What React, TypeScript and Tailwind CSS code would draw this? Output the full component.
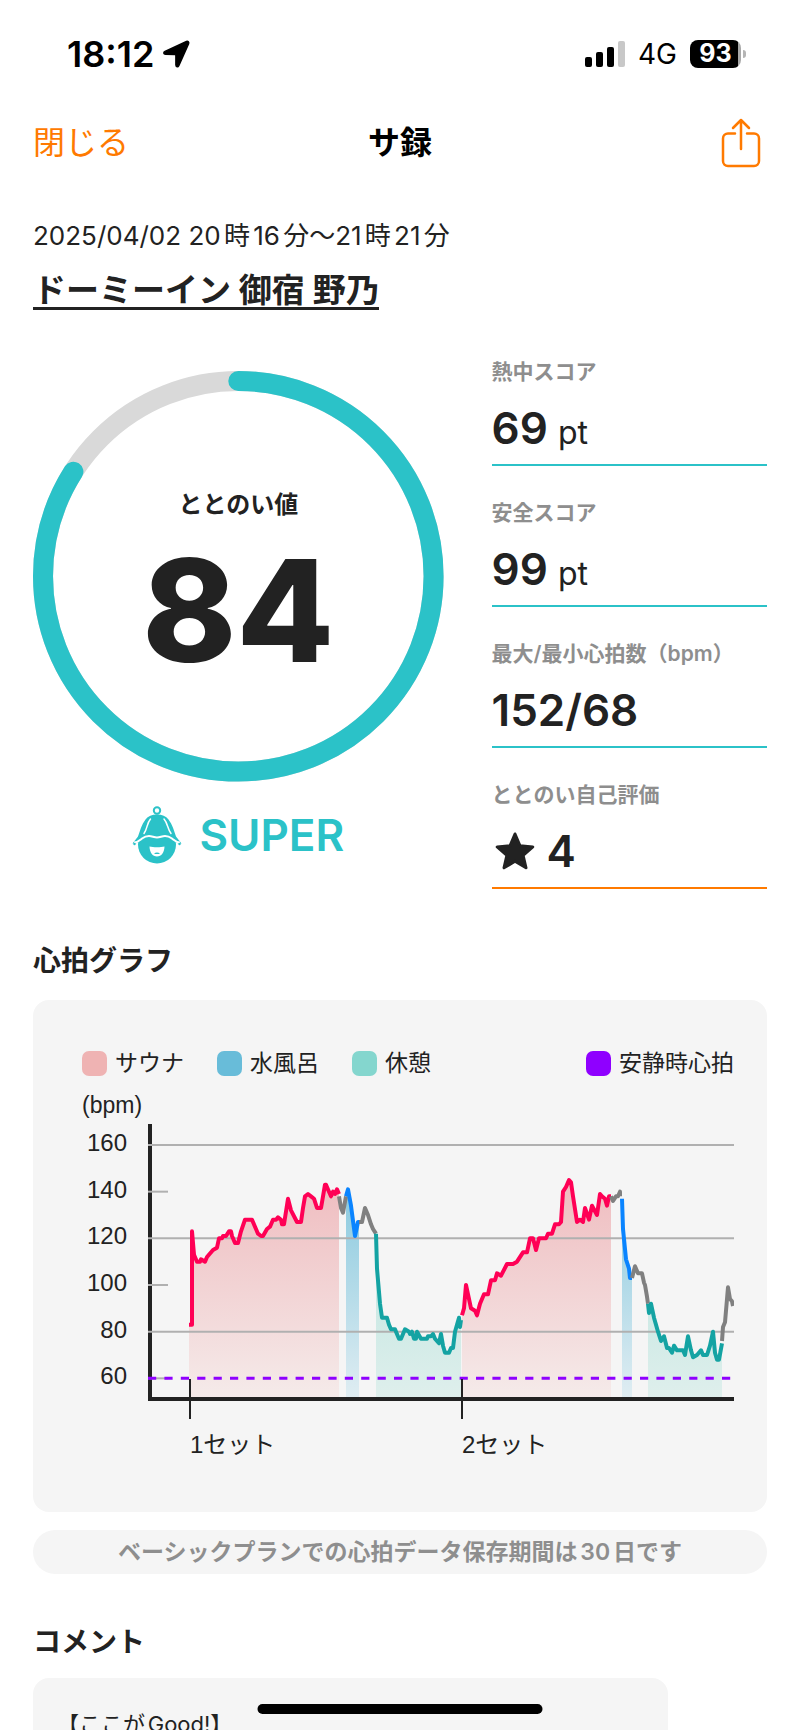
type Phase = "sauna" | "water" | "rest" | "move";
type Point = [x: number, bpm: number];

interface Segment {
  phase: Phase;
  points: Point[];
}

const BPM_TOP = 160;
const BPM_RESTING = 60;
const PLOT_LEFT = 68;
const PLOT_RIGHT = 652;
const PLOT_TOP = 56;
const PLOT_BOTTOM = 308;

const STROKES: Record<Phase, string> = {
  sauna: "#ff0055",
  water: "#0a84ff",
  rest: "#14a3a3",
  move: "#808080",
};

const HEART_RATE: Segment[] = [
  {
    phase: "sauna",
    points: [
      [39, 83], [42, 83], [42, 123], [44, 113], [47, 110], [50, 110], [51, 111], [55, 110],
      [57, 112], [63, 115], [67, 116], [69, 120], [72, 120], [73, 121], [76, 121], [79, 123],
      [81, 123], [82, 121], [85, 118], [88, 118], [91, 123], [95, 128], [102, 128], [105, 125],
      [108, 122], [111, 121], [113, 121], [117, 124], [120, 125], [123, 128], [126, 128], [128, 129],
      [131, 128], [132, 126], [134, 126], [138, 137], [141, 132], [147, 127], [151, 127], [153, 133],
      [155, 138], [158, 139], [161, 138], [164, 137], [167, 133], [171, 133], [173, 138], [175, 143],
      [176, 143], [179, 140], [181, 138], [183, 140], [185, 139], [187, 141], [189, 139],
    ],
  },
  { phase: "move", points: [[189, 138], [191, 133], [193, 131], [196, 138]] },
  { phase: "water", points: [[196, 138], [198, 141], [201, 134], [205, 121], [208, 127], [209, 127]] },
  {
    phase: "move",
    points: [[209, 127], [212, 127], [215, 133], [218, 130], [221, 126], [223, 124], [226, 122]],
  },
  {
    phase: "rest",
    points: [
      [226, 122], [227, 107], [230, 92], [232, 86], [237, 86], [239, 83], [241, 81], [245, 81],
      [246, 80], [249, 77], [251, 77], [255, 81], [259, 80], [260, 79], [262, 80], [264, 77],
      [266, 77], [267, 80], [271, 77], [277, 77], [278, 78], [281, 78], [283, 79], [285, 77],
      [289, 75], [291, 79], [293, 74], [295, 71], [299, 71], [301, 73], [303, 73], [305, 80],
      [309, 86], [310, 82], [311, 85],
    ],
  },
  {
    phase: "sauna",
    points: [
      [312, 87], [314, 90], [316, 100], [321, 90], [325, 89], [327, 87], [330, 92], [334, 96],
      [338, 96], [341, 102], [345, 102], [347, 105], [351, 104], [357, 109], [363, 109], [367, 110],
      [373, 114], [377, 114], [380, 120], [383, 120], [386, 115], [389, 120], [396, 120], [398, 122],
      [402, 122], [405, 126], [409, 126], [411, 127], [413, 140], [416, 142], [419, 145], [421, 144],
      [423, 138], [427, 127], [430, 128], [433, 127], [435, 133], [439, 128], [442, 134], [447, 130],
      [450, 139], [452, 138], [455, 137], [457, 134], [459, 138], [461, 138],
    ],
  },
  { phase: "move", points: [[461, 138], [463, 136], [466, 138], [468, 138], [470, 140], [470, 138]] },
  { phase: "water", points: [[472, 137], [473, 124], [476, 111], [479, 107], [480, 103], [482, 103]] },
  {
    phase: "move",
    points: [[482, 103], [485, 108], [488, 105], [492, 105], [494, 101], [495, 100], [497, 95], [498, 92]],
  },
  {
    phase: "rest",
    points: [
      [498, 92], [499, 88], [501, 92], [504, 86], [508, 80], [511, 76], [514, 78], [517, 73],
      [519, 73], [522, 71], [524, 74], [527, 72], [533, 72], [535, 70], [538, 78], [541, 72],
      [543, 69], [547, 70], [551, 72], [553, 70], [557, 70], [560, 74], [563, 80], [565, 71],
      [567, 68], [569, 68], [572, 75],
    ],
  },
  {
    phase: "move",
    points: [[572, 76], [573, 82], [575, 84], [578, 99], [580, 94], [582, 93], [583, 91]],
  },
];

const SETS = [
  { label: "1セット", x: 40 },
  { label: "2セット", x: 312 },
];

const LEGEND = [
  { label: "サウナ", color: "bg-[#efb3b3]" },
  { label: "水風呂", color: "bg-[#68bcd9]" },
  { label: "休憩", color: "bg-[#84d6ce]" },
];

function bpmToY(bpm: number) {
  return PLOT_TOP + ((BPM_TOP - bpm) * 7) / 3;
}

function toLine(points: Point[]) {
  return points.map(([x, bpm]) => `${PLOT_LEFT + x},${bpmToY(bpm).toFixed(1)}`).join(" ");
}

function toArea(points: Point[]) {
  const first = PLOT_LEFT + points[0][0];
  const last = PLOT_LEFT + points[points.length - 1][0];
  return `${first},${PLOT_BOTTOM} ${toLine(points)} ${last},${PLOT_BOTTOM}`;
}

function StatusBar() {
  return (
    <div className="flex h-[107px] items-center justify-between pl-[67px] pr-[54px] text-black">
      <div className="flex items-center gap-2">
        <span className="text-[36px] font-semibold leading-none">18:12</span>
        <svg viewBox="0 0 28 28" className="size-7" aria-hidden="true">
          <path
            d="M24.500 1.500 3 11.400c-1.800.900-1.500 2.800.5 2.900l9.500.300c.700 0 .900.300.900 1v9.400c.100 2 2.100 2.300 2.900.6L26.600 3.700c.600-1.500-.6-2.800-2.100-2.200z"
            fill="currentColor"
            stroke="currentColor"
            strokeWidth="1.500"
            strokeLinejoin="round"
          />
        </svg>
      </div>
      <div className="flex items-center">
        <svg viewBox="0 0 40 26" className="mr-[13px] h-[26px] w-10" aria-hidden="true">
          <rect x="0" y="16" width="7" height="10" rx="2" />
          <rect x="11" y="11" width="7" height="15" rx="2" />
          <rect x="22" y="6" width="7" height="20" rx="2" />
          <rect x="33" y="0" width="7" height="26" rx="2" fill="#c8c8c8" />
        </svg>
        <span className="mr-[13px] text-[28px] leading-none">4G</span>
        <div className="flex h-7 w-[51px] items-center justify-center rounded-lg bg-[linear-gradient(90deg,#000_95%,#a8a8a8_95%)] text-[25px] font-bold leading-none text-white">
          93
        </div>
        <div className="ml-[2px] h-2 w-[3px] rounded-r-full bg-[#b5b5b5]" />
      </div>
    </div>
  );
}

function Header() {
  return (
    <header className="grid h-[72px] grid-cols-3 items-center px-[33px]">
      <button type="button" className="justify-self-start text-[32px] leading-none text-[#ff7a00]">
        閉じる
      </button>
      <h1 className="justify-self-center text-[32px] font-bold leading-none text-black">サ録</h1>
      <button type="button" aria-label="共有" className="mr-[6px] justify-self-end text-[#ff7a00]">
        <svg
          viewBox="0 0 40 50"
          className="h-[50px] w-10"
          fill="none"
          stroke="currentColor"
          strokeWidth="2.500"
          strokeLinecap="round"
          strokeLinejoin="round"
        >
          <path d="M14 15.500H7a5 5 0 0 0-5 5V43a5 5 0 0 0 5 5h26a5 5 0 0 0 5-5V20.500a5 5 0 0 0-5-5h-7" />
          <path d="M20 31V2M12 10l8-8 8 8" />
        </svg>
      </button>
    </header>
  );
}

function ScoreRing({ score }: { score: number }) {
  return (
    <div className="grid">
      <svg viewBox="0 0 410 410" className="col-start-1 row-start-1 w-full" aria-hidden="true">
        <g fill="none" strokeWidth="20" transform="rotate(-90 205 205)">
          <circle cx="205" cy="205" r="195" stroke="#d9d9d9" />
          <circle
            cx="205"
            cy="205"
            r="195"
            stroke="#2bc2c8"
            strokeLinecap="round"
            pathLength="100"
            strokeDasharray={`${score} 100`}
          />
        </g>
      </svg>
      <div className="col-start-1 row-start-1 flex flex-col items-center pt-[122px]">
        <p className="text-2xl font-semibold leading-6">ととのい値</p>
        <p className="mt-[22px] text-[142px] font-extrabold leading-[142px]">{score}</p>
      </div>
    </div>
  );
}

function BellIcon() {
  return (
    <svg viewBox="0 0 50 58" className="h-[58px] w-[50px]" aria-hidden="true">
      <circle cx="25" cy="4.500" r="3.200" fill="none" stroke="#2bc2c8" strokeWidth="2" />
      <circle cx="25" cy="38.500" r="19" fill="#2bc2c8" />
      <path
        d="M25 8.500c-5 0-9 1.500-11.500 5C9.500 18.500 8 25 6 30.500L.5 37.500c3 .3 5-.5 7-2.500 3-3 5-4.500 9-4.500 3.500 0 5 1.500 8.500 1.500s5-1.500 8.500-1.500c4 0 6 1.500 9 4.500 2 2 4 2.800 7 2.500L44 30.500c-2-5.500-3.500-12-7.500-17-2.500-3.500-6.500-5-11.500-5z"
        fill="#2bc2c8"
      />
      <path
        d="M2 36.500c4 0 5.500-2 8-4 2.500-1.800 4.500-2.500 7-2.500 3 0 5 1.500 8 1.500s5-1.500 8-1.500c2.500 0 4.500.7 7 2.500 2.500 2 4 4 8 4"
        fill="none"
        stroke="#fff"
        strokeWidth="2"
      />
      <path
        d="M18.500 13c-4 4.500-3 10-6.500 14.500M32 13c4 4.500 3.500 10 7 14.500"
        fill="none"
        stroke="#fff"
        strokeWidth="1.500"
        strokeLinecap="round"
      />
      <circle cx="2.500" cy="38" r="1.200" fill="#2bc2c8" />
      <circle cx="47.500" cy="38" r="1.200" fill="#2bc2c8" />
      <path d="M17.500 40.500c3.500 1 11.500 1 15 0-.2 6-3 10-7.500 10s-7.300-4-7.500-10z" fill="#fff" />
      <path d="M22 47.500c1.500-1.200 4.500-1.200 6 0-1.500.8-4.500.8-6 0z" fill="#2bc2c8" />
    </svg>
  );
}

function Stat({
  label,
  accent = "border-[#2bc2c8]",
  children,
}: {
  label: string;
  accent?: string;
  children: React.ReactNode;
}) {
  return (
    <div className={`flex h-[141px] flex-col justify-end border-b-2 ${accent}`}>
      <dt className="text-[21px] font-semibold leading-6 text-[#8e8e8e] [text-autospace:normal]">
        {label}
      </dt>
      <dd className="mt-[14px] mb-[6px] flex h-[60px] items-baseline text-[44px] font-semibold leading-[60px]">
        {children}
      </dd>
    </div>
  );
}

function HeartRateChart() {
  return (
    <svg
      viewBox="0 0 652 370"
      className="block w-full font-['Liberation_Sans','Noto_Sans_CJK_JP',sans-serif]"
      role="img"
      aria-label="心拍グラフ"
    >
      <defs>
        <linearGradient id="sauna" gradientUnits="userSpaceOnUse" x1="0" y1="90" x2="0" y2="310">
          <stop offset="0" stopColor="#efbcbf" />
          <stop offset="1" stopColor="#f5ebea" />
        </linearGradient>
        <linearGradient id="water" gradientUnits="userSpaceOnUse" x1="0" y1="90" x2="0" y2="310">
          <stop offset="0" stopColor="#86c8de" />
          <stop offset="1" stopColor="#e0edf2" />
        </linearGradient>
        <linearGradient id="rest" gradientUnits="userSpaceOnUse" x1="0" y1="150" x2="0" y2="310">
          <stop offset="0" stopColor="#bfe5e0" />
          <stop offset="1" stopColor="#dfefec" />
        </linearGradient>
      </defs>

      <text x="0" y="24" fontSize="23" fill="#222">
        (bpm)
      </text>
      {[160, 140, 120, 100, 80, 60].map((bpm) => (
        <text key={bpm} x="45" y={bpmToY(bpm) + 6} fontSize="24" textAnchor="end" fill="#222">
          {bpm}
        </text>
      ))}

      {HEART_RATE.filter((s) => s.phase !== "move").map((s) => (
        <polygon key={s.points[0][0]} points={toArea(s.points)} fill={`url(#${s.phase})`} />
      ))}

      <path d={`M${PLOT_LEFT} 35V310H${PLOT_RIGHT}`} fill="none" stroke="#222" strokeWidth="4" />
      {[160, 140, 120, 100, 80, 60].map((bpm) => (
        <line
          key={bpm}
          x1={PLOT_LEFT - 2}
          x2={bpm % 40 === 0 ? PLOT_RIGHT : PLOT_LEFT + 18}
          y1={bpmToY(bpm)}
          y2={bpmToY(bpm)}
          stroke="#b0b0b0"
          strokeWidth="2"
        />
      ))}
      <line
        x1={PLOT_LEFT - 2}
        x2={PLOT_RIGHT}
        y1={bpmToY(BPM_RESTING)}
        y2={bpmToY(BPM_RESTING)}
        stroke="#8f00ff"
        strokeWidth="3"
        strokeDasharray="8.200 8.200"
      />

      {HEART_RATE.map((s, i) => (
        <polyline
          key={i}
          points={toLine(s.points)}
          fill="none"
          stroke={STROKES[s.phase]}
          strokeWidth="4"
          strokeLinejoin="round"
        />
      ))}

      {SETS.map((set) => (
        <g key={set.label}>
          <path d={`M${PLOT_LEFT + set.x} 290v40`} stroke="#222" strokeWidth="2" />
          <text x={PLOT_LEFT + set.x} y="364" fontSize="24" fill="#222">
            {set.label}
          </text>
        </g>
      ))}
    </svg>
  );
}

function LegendItem({ label, color }: { label: string; color: string }) {
  return (
    <li className="flex items-center gap-2">
      <span className={`size-[25px] rounded-[7px] ${color}`} />
      {label}
    </li>
  );
}

export default function App() {
  return (
    <div className="relative h-screen overflow-hidden bg-white font-['Inter','Noto_Sans_CJK_JP',sans-serif] text-[#222]">
      <StatusBar />
      <Header />

      <main className="px-[33px]">
        <p className="mt-[39px] text-[26px] leading-9 [text-autospace:normal]">
          2025/04/02 20時16分〜21時21分
        </p>
        <h2 className="mt-4 text-[33px] font-bold leading-10">
          <a href="#facility" className="inline-block border-b-3 border-[#222] leading-[34px]">
            ドーミーイン 御宿 野乃
          </a>
        </h2>

        <section className="mt-[15px] grid grid-cols-[410fr_275fr] gap-12">
          <div className="pt-[46px]">
            <ScoreRing score={84} />
            <div className="mt-6 flex items-center justify-center gap-[17px]">
              <BellIcon />
              <p className="text-[44px] font-semibold leading-none text-[#2bc2c8]">SUPER</p>
            </div>
          </div>
          <dl>
            <Stat label="熱中スコア">
              69<span className="ml-[10px] text-[32px] font-normal">pt</span>
            </Stat>
            <Stat label="安全スコア">
              99<span className="ml-[10px] text-[32px] font-normal">pt</span>
            </Stat>
            <Stat label="最大/最小心拍数（bpm）">152/68</Stat>
            <Stat label="ととのい自己評価" accent="border-[#ff7a00]">
              <svg
                viewBox="0 0 40 38"
                className="ml-[3px] mr-3 h-[38px] w-10 self-center"
                aria-hidden="true"
              >
                <path
                  d="M20 2l5 11.800 12.800 1.100-9.700 8.400 2.900 12.500L20 29.200 9 35.800l2.900-12.500-9.700-8.400L15 13.800z"
                  fill="#222"
                  stroke="#222"
                  strokeWidth="3"
                  strokeLinejoin="round"
                />
              </svg>
              4
            </Stat>
          </dl>
        </section>

        <h2 className="mt-[52px] text-[28px] font-bold leading-10">心拍グラフ</h2>
        <section className="mt-[19px] rounded-2xl bg-[#f5f5f5] pb-[53px] pl-[49px] pr-[33px] pt-[45px]">
          <ul className="flex h-9 items-center gap-[33px] text-[23px]">
            {LEGEND.map((item) => (
              <LegendItem key={item.label} {...item} />
            ))}
            <li className="ml-auto flex items-center gap-2">
              <span className="size-[25px] rounded-[7px] bg-[#8f00ff]" />
              安静時心拍
            </li>
          </ul>
          <div className="mt-2">
            <HeartRateChart />
          </div>
        </section>
        <p className="mt-[18px] rounded-full bg-[#f5f5f5] text-center text-[23px] font-semibold leading-[44px] text-[#8e8e8e] [text-autospace:normal]">
          ベーシックプランでの心拍データ保存期間は30日です
        </p>

        <h2 className="mt-12 text-[28px] font-bold leading-10">コメント</h2>
        <div className="mt-4 mr-[99px] rounded-2xl bg-[#f5f5f5] px-6 pt-7 pb-12 text-[22px] leading-9 [text-autospace:normal]">
          【ここがGood!】
        </div>
      </main>

      <div className="fixed bottom-4 left-1/2 h-[10px] w-[285px] -translate-x-1/2 rounded-full bg-black" />
    </div>
  );
}
